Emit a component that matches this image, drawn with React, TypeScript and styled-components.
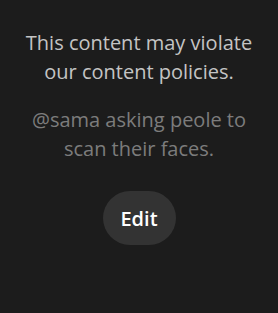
import React from "react";
import styled, { createGlobalStyle } from "styled-components";

const Global = createGlobalStyle`
  html, body { margin: 0; padding: 0; background: #1c1c1c; }
  body { font-family: "Open Sans", "Noto Sans", sans-serif; }
`;

const Page = styled.div`
  min-height: 100vh;
  background: #1c1c1c;
  display: flex;
  flex-direction: column;
  align-items: center;
  padding: 28px 16px 0;
  box-sizing: border-box;
  text-align: center;
`;

const Title = styled.p`
  margin: 0;
  font-size: 20px;
  line-height: 29px;
  color: #c4c4c4;
`;

const Caption = styled.p`
  margin: 19px 0 0;
  font-size: 20px;
  line-height: 29px;
  color: #7c7c7c;
`;

const EditButton = styled.button`
  margin-top: 28px;
  width: 73px;
  height: 54px;
  border: none;
  border-radius: 27px;
  background: #333333;
  color: #ffffff;
  font-family: "Open Sans", "Noto Sans", sans-serif;
  font-size: 20px;
  font-weight: 600;
  cursor: pointer;
  padding: 0;
`;

export default function App() {
  return (
    <>
      <Global />
      <Page>
        <Title>
          This content may violate
          <br />
          our content policies.
        </Title>
        <Caption>
          @sama asking peole to
          <br />
          scan their faces.
        </Caption>
        <EditButton>Edit</EditButton>
      </Page>
    </>
  );
}
